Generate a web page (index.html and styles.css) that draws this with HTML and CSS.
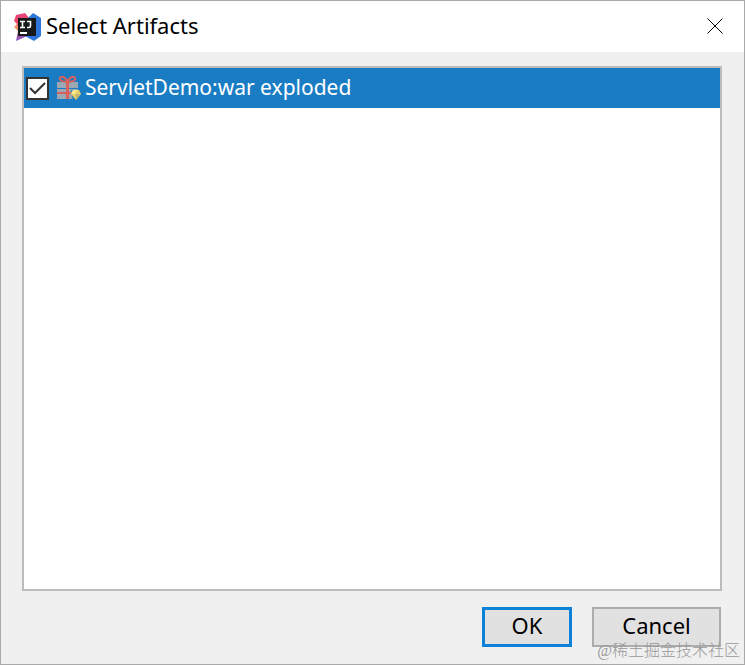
FILE: index.html
```html
<!DOCTYPE html>
<html lang="en">
<head>
<meta charset="utf-8">
<title>Select Artifacts</title>
<link rel="stylesheet" href="styles.css">
</head>
<body>
<main class="dialog">
  <header class="titlebar">
    <svg class="logo" viewBox="0 0 28 28" aria-hidden="true">
      <defs>
        <linearGradient id="warm" x1="0" y1="0" x2="0" y2="1">
          <stop offset="0" stop-color="#e8457c"/>
          <stop offset=".35" stop-color="#f0486a"/>
          <stop offset=".5" stop-color="#f39a63"/>
          <stop offset=".65" stop-color="#e08a78"/>
          <stop offset=".8" stop-color="#a653a9"/>
          <stop offset="1" stop-color="#8552c0"/>
        </linearGradient>
      </defs>
      <path fill="url(#warm)" d="M2 2l9-2 4 5v18l-4 1-9 4 2-10-4-4 3-3-3-3z"/>
      <path fill="#2f76dc" d="M14 5l5-5 8 5v18l-7 5-9-5z"/>
      <path fill="#17191b" d="M4 5h18v18H4z"/>
      <path fill="none" stroke="#fff" stroke-width="1.6" d="M6 8.500h5M8.500 8.500v6M6 14.500h5M13 8.500h3.500v4.500q0 1.500-1.500 1.500H13"/>
      <path fill="#fff" d="M6 19h7v2H6z"/>
    </svg>
    <h1 class="title">Select Artifacts</h1>
    <button class="close" type="button" aria-label="Close">
      <svg class="cross" viewBox="0 0 16 16" aria-hidden="true"><path d="M.5.5l15 15M15.500.5l-15 15"/></svg>
    </button>
  </header>
  <form class="content">
    <div class="list">
      <label class="item">
        <input class="check" type="checkbox" checked>
        <svg class="gift" viewBox="0 0 26 26" aria-hidden="true">
          <path fill="#9ba7b3" d="M1 7h21v6H1zM1 14h21v10H1z"/>
          <path fill="#d8615b" d="M10 7h3v17h-3zM1 17h21v2H1z"/>
          <path fill="none" stroke="#d8615b" stroke-width="2" d="M11.500 7C9 1 5 1 4 3s2 4 7.500 4c5.500 0 8.500-2 7.500-4s-5-2-7.500 4z"/>
          <path fill="#1a7dc4" d="M15 15h9v11h-7z"/>
          <path fill="#e9cf62" d="M17 15h6l2 4-5 6-5-6z"/>
          <path fill="#f9e995" d="M17 15h4l-2 4h-4z"/>
          <path fill="#bdb47a" d="M20 19h5l-5 6z"/>
        </svg>
        <span class="name">ServletDemo:war exploded</span>
      </label>
    </div>
    <div class="actions">
      <button class="button primary" type="button">OK</button>
      <button class="button cancel" type="button">Cancel</button>
    </div>
  </form>
  <div class="watermark">@稀土掘金技术社区</div>
</main>
</body>
</html>
```
FILE: styles.css
```css
* {
  box-sizing: border-box;
}

body {
  margin: 0;
  font: 22px/30px "Noto Sans", "Open Sans", sans-serif;
  color: #000;
}

.dialog {
  position: relative;
  display: flex;
  flex-direction: column;
  min-height: 100vh;
  border: 1px solid #a9a9a9;
  background: #f0f0f0;
}

.titlebar {
  display: flex;
  align-items: center;
  height: 51px;
  padding: 0 21px 0 13px;
  background: #fff;
}

.logo {
  width: 28px;
  height: 28px;
}

.title {
  flex: 1;
  margin: 0 0 0 4px;
  padding-bottom: 4px;
  font-size: 22px;
  font-weight: 400;
}

.close {
  display: flex;
  padding: 0 0 2px;
  border: 0;
  background: none;
}

.cross {
  width: 16px;
  height: 16px;
  fill: none;
  stroke: #000;
}

.content {
  flex: 1;
  display: flex;
  flex-direction: column;
  gap: 16px;
  padding: 14px 22px 17px 21px;
}

.list {
  flex: 1;
  border: 2px solid #bcbcbc;
  background: #fff;
}

.item {
  display: flex;
  align-items: center;
  height: 40px;
  padding-left: 2px;
  background: #1a7dc4;
  color: #fff;
}

.check {
  appearance: none;
  width: 23px;
  height: 23px;
  margin: 0;
  border: 2px solid #333;
  background: #fff;
}

.check:checked {
  background: #fff url("data:image/svg+xml,%3Csvg xmlns='http://www.w3.org/2000/svg' viewBox='0 0 19 19'%3E%3Cpath d='M2 9l5 5L17 4' fill='none' stroke='%23333' stroke-width='2'/%3E%3C/svg%3E");
}

.gift {
  width: 26px;
  height: 26px;
  margin: 0 3px 0 7px;
}

.name {
  padding-bottom: 2px;
  font-size: 21px;
}

.actions {
  display: flex;
  justify-content: flex-end;
  gap: 20px;
  padding-right: 1px;
}

.button {
  height: 40px;
  padding: 0 0 4px;
  border: 2px solid #adadad;
  background: #e1e1e1;
  color: #000;
  font: inherit;
}

.primary {
  width: 90px;
  border: 3px solid #0b82d8;
}

.cancel {
  width: 129px;
}

.watermark {
  position: absolute;
  right: 4px;
  bottom: 2px;
  color: #999;
  font: 300 16px/22px "Liberation Serif", "Noto Sans CJK SC", serif;
}
```
